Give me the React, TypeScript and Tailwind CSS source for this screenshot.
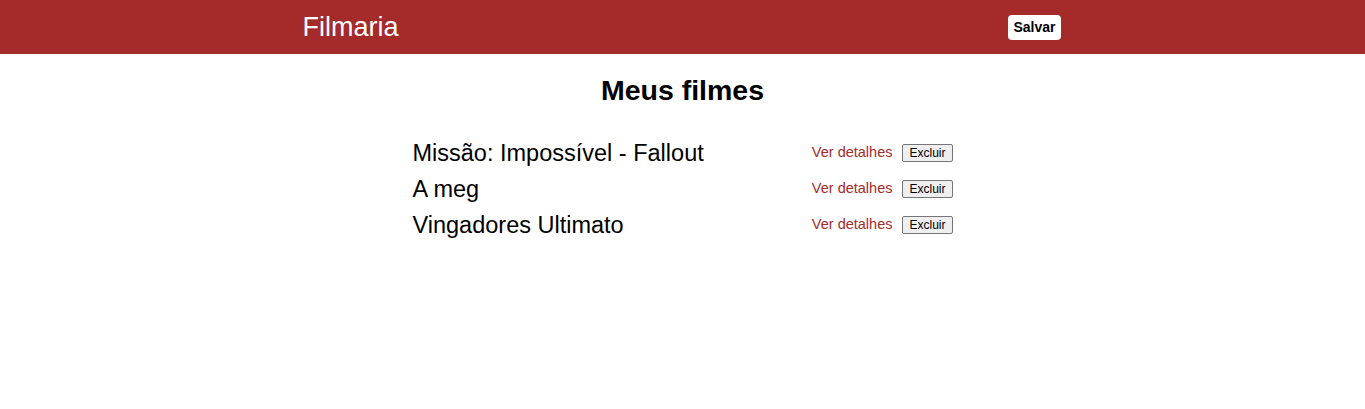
const filmes = ["Missão: Impossível - Fallout", "A meg", "Vingadores Ultimato"];

export default function App() {
  return (
    <div className="min-h-screen bg-white font-['Liberation_Sans',Arial,sans-serif] text-black">
      <header className="h-[54px] bg-[#a52a2a]">
        <div className="mx-auto flex h-full max-w-[800px] items-center justify-between px-5">
          <a href="#" className="text-[27px] leading-none text-white">
            Filmaria
          </a>
          <button className="mr-[2px] rounded-[4px] bg-white px-[5px] py-[4px] text-[14px] font-bold leading-[17px] text-black">
            Salvar
          </button>
        </div>
      </header>

      <main className="mx-auto w-[540px]">
        <h1 className="mt-[21px] text-center text-[28.5px] font-bold leading-[31px]">
          Meus filmes
        </h1>
        <ul className="mt-[29px]">
          {filmes.map((filme) => (
            <li key={filme} className="flex h-9 items-center justify-between">
              <span className="text-[23.5px] leading-[28px]">{filme}</span>
              <div className="flex items-center">
                <a href="#" className="text-[14.5px] text-[#a52a2a]">
                  Ver detalhes
                </a>
                <button className="ml-[10px] rounded-[2px] border border-[#767676] bg-[#efefef] px-[6px] py-[1px] text-[12px] leading-[14px]">
                  Excluir
                </button>
              </div>
            </li>
          ))}
        </ul>
      </main>
    </div>
  );
}
